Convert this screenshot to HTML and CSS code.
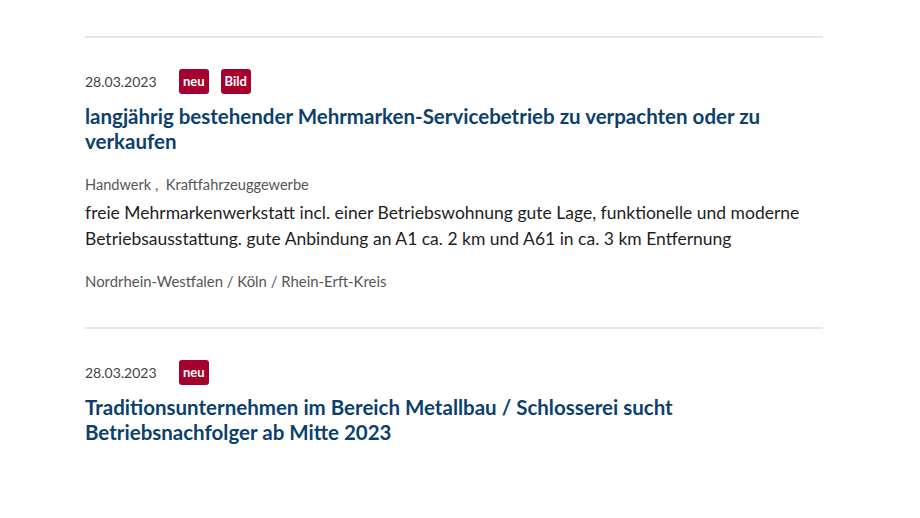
FILE: index.html
```html
<!DOCTYPE html>
<html lang="de">
<head>
<meta charset="utf-8">
<link rel="stylesheet" href="styles.css">
</head>
<body>
<main class="list">
  <article class="entry">
    <div class="meta">
      <span class="date">28.03.2023</span>
      <span class="badges"><span class="badge">neu</span><span class="badge">Bild</span></span>
    </div>
    <h2 class="title">langjährig bestehender Mehrmarken-Servicebetrieb zu verpachten oder zu verkaufen</h2>
    <p class="cats">Handwerk ,&nbsp; Kraftfahrzeuggewerbe</p>
    <p class="desc">freie Mehrmarkenwerkstatt incl. einer Betriebswohnung gute Lage, funktionelle und moderne Betriebsausstattung. gute Anbindung an A1 ca. 2 km und A61 in ca. 3 km Entfernung</p>
    <p class="loc">Nordrhein-Westfalen / Köln / Rhein-Erft-Kreis</p>
  </article>
  <article class="entry">
    <div class="meta">
      <span class="date">28.03.2023</span>
      <span class="badges"><span class="badge">neu</span></span>
    </div>
    <h2 class="title">Traditionsunternehmen im Bereich Metallbau / Schlosserei sucht Betriebsnachfolger ab Mitte 2023</h2>
  </article>
</main>
</body>
</html>
```
FILE: styles.css
```css
html, body {
  margin: 0;
  padding: 0;
  background: #fff;
}
body {
  font-family: Lato, "Noto Sans", sans-serif;
  color: #222;
}
.list {
  width: 738px;
  margin-left: 85px;
  padding-top: 36px;
}
.entry {
  border-top: 2px solid #e6e6e6;
  padding-top: 31px;
  padding-bottom: 36px;
}
.meta {
  display: flex;
  align-items: center;
  height: 25px;
}
.date {
  font-size: 14px;
  color: #444;
  width: 94px;
}
.badges {
  display: flex;
  gap: 12px;
}
.badge {
  background: #a5002e;
  color: #fff;
  font-size: 13px;
  font-weight: 700;
  height: 25px;
  line-height: 25px;
  padding: 0 4px;
  border-radius: 3px;
}
.title {
  margin: 10px 0 0;
  font-size: 20.5px;
  line-height: 25px;
  font-weight: 700;
  color: #0c3f6e;
}
.cats {
  margin: 21px 0 0;
  font-size: 14.6px;
  line-height: 20px;
  color: #555;
}
.desc {
  margin: 5px 0 0;
  font-size: 17.5px;
  line-height: 26px;
  color: #1e1e1e;
}
.loc {
  margin: 19px 0 0;
  font-size: 14.9px;
  line-height: 20px;
  color: #555;
}
```
